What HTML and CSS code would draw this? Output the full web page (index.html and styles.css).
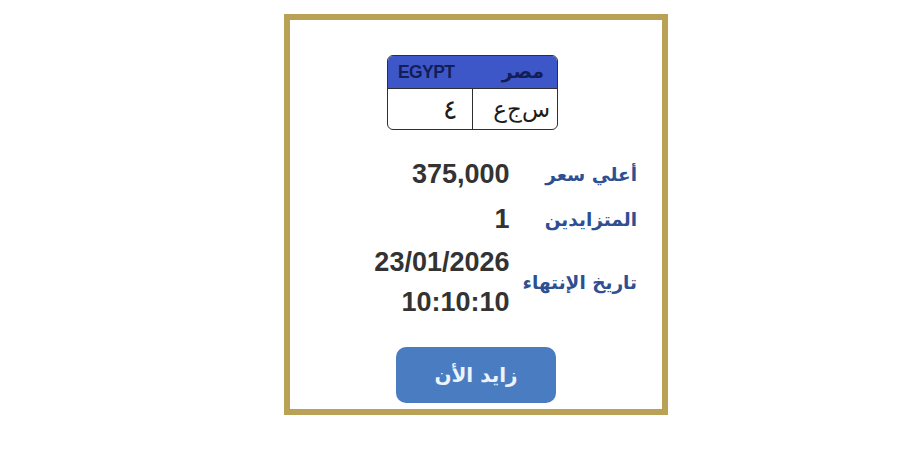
FILE: index.html
```html
<!DOCTYPE html>
<html lang="ar">
<head>
<meta charset="utf-8">
<link rel="stylesheet" href="styles.css">
</head>
<body>
<div class="frame">
  <div class="plate">
    <div class="plate-head">
      <span class="egypt">EGYPT</span>
      <span class="misr">مصر</span>
    </div>
    <div class="plate-body">
      <div class="cell num">٤</div>
      <div class="cell letters">س&zwnj;ج&zwnj;ع</div>
    </div>
  </div>
  <div class="info">
    <div class="label">أعلي سعر</div>
    <div class="value">375,000</div>
    <div class="label">المتزايدين</div>
    <div class="value">1</div>
    <div class="label">تاريخ الإنتهاء</div>
    <div class="value multi">23/01/2026<br>10:10:10</div>
  </div>
  <button class="bid">زايد الأن</button>
</div>
</body>
</html>
```
FILE: styles.css
```css
html, body {
  margin: 0;
  padding: 0;
  background: #ffffff;
}
body {
  padding: 14px 0 0 284px;
  font-family: "Liberation Sans", "DejaVu Sans", sans-serif;
}
.frame {
  box-sizing: border-box;
  width: 384px;
  height: 401px;
  border: 6px solid #b9a156;
  background: #fff;
  display: flex;
  flex-direction: column;
  align-items: flex-start;
  padding-top: 35px;
}
.plate {
  box-sizing: border-box;
  margin-left: 97px;
  width: 171px;
  height: 75px;
  border: 1.5px solid #2f2f33;
  border-radius: 6px;
  overflow: hidden;
  display: flex;
  flex-direction: column;
}
.plate-head {
  height: 32px;
  background: #3d57c9;
  border-bottom: 1.5px solid #2f2f33;
  display: flex;
  align-items: center;
  justify-content: space-between;
  padding: 0 13px 0 10px;
  color: #141d55;
  font-weight: bold;
}
.egypt {
  font-size: 17.5px;
  letter-spacing: -0.6px;
}
.misr {
  font-family: "DejaVu Sans", sans-serif;
  font-size: 19px;
  direction: rtl;
  padding-bottom: 3px;
}
.plate-body {
  flex: 1;
  display: flex;
}
.cell {
  box-sizing: border-box;
  width: 50%;
  display: flex;
  align-items: center;
  color: #1d1d1d;
  font-family: "DejaVu Sans", sans-serif;
  direction: rtl;
}
.num {
  border-right: 1.5px solid #2f2f33;
  justify-content: flex-start;
  padding-right: 14px;
  font-size: 27px;
}
.letters {
  justify-content: flex-start;
  padding-right: 7px;
  font-size: 23px;
  letter-spacing: 1px;
}
.info {
  direction: rtl;
  align-self: flex-end;
  margin-right: 25px;
  margin-top: 22px;
  display: grid;
  grid-template-columns: auto auto;
  column-gap: 13px;
}
.label {
  font-family: "DejaVu Sans", sans-serif;
  font-weight: bold;
  font-size: 18.5px;
  color: #2e4f92;
  align-self: center;
  white-space: nowrap;
}
.value {
  font-weight: bold;
  font-size: 27px;
  color: #333333;
  line-height: 45px;
  text-align: right;
}
.value.multi {
  line-height: 40px;
}
.bid {
  align-self: center;
  margin-top: 25px;
  width: 160px;
  height: 56px;
  border: none;
  border-radius: 10px;
  background: #4a7cc1;
  color: #eef3fb;
  font-family: "DejaVu Sans", sans-serif;
  font-size: 20px;
  font-weight: bold;
  direction: rtl;
}
```
